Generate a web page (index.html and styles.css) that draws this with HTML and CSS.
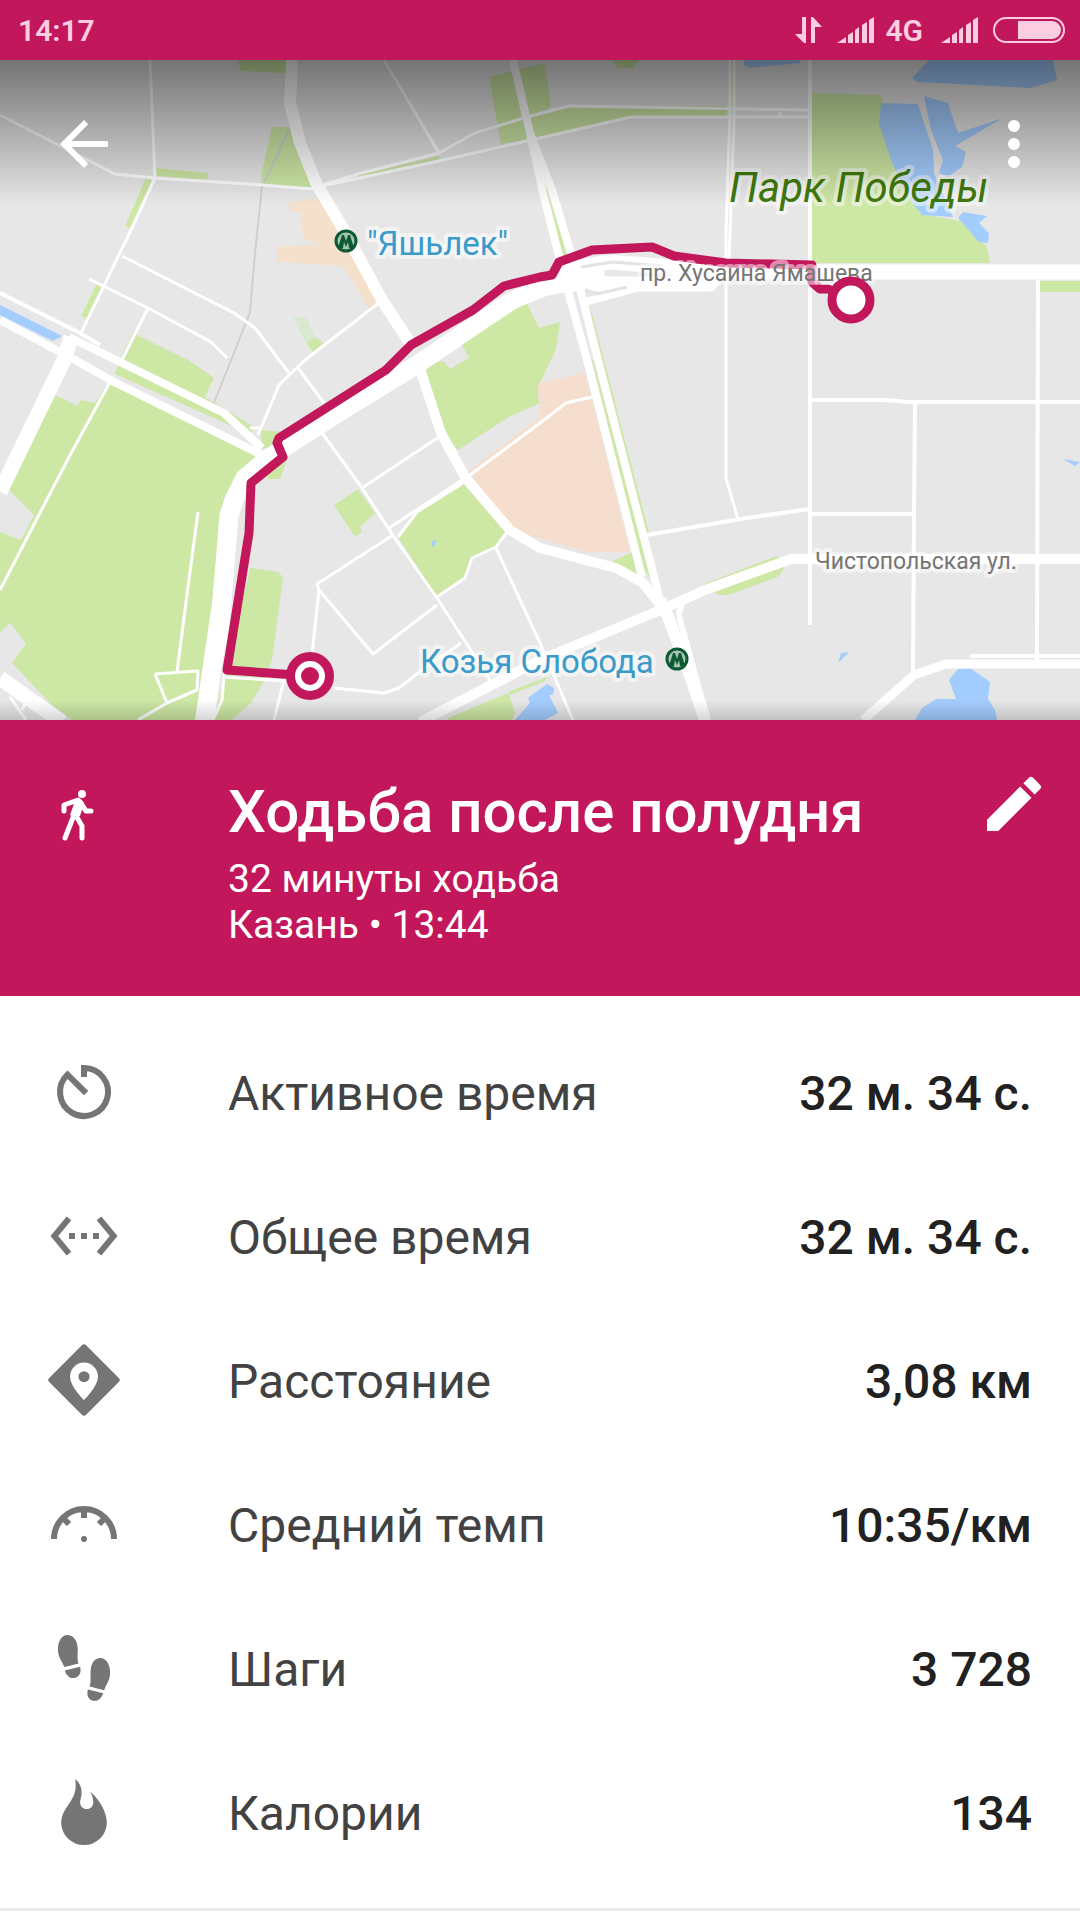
FILE: index.html
```
<!DOCTYPE html>
<html lang="ru">
<head>
<meta charset="UTF-8">
<meta name="viewport" content="width=device-width, initial-scale=1.0">
<title>Ходьба после полудня</title>
<link rel="stylesheet" href="styles.css">
</head>
<body>
<div class="status-bar">
  <span class="clock">14:17</span>
  <svg class="arrows" width="27" height="26" viewBox="0 0 27 26"><path d="M7 0h4v26h-2L0 17h7zM16 26V0h2l9 10h-7v16z"/></svg>
  <svg class="signal" width="37" height="26" viewBox="0 0 37 26"><path d="M0 26l9-6v6zM11 18l5-3v11h-5zM18 13l4-3v16h-4zM25 8l5-3v21h-5zM32 3l5-3v26h-5z"/></svg>
  <span class="network">4G</span>
  <svg class="signal" width="37" height="26" viewBox="0 0 37 26"><path d="M0 26l9-6v6zM11 18l5-3v11h-5zM18 13l4-3v16h-4zM25 8l5-3v21h-5zM32 3l5-3v26h-5z"/></svg>
  <svg class="battery" width="72" height="26" viewBox="0 0 72 26"><rect x="1" y="1" width="70" height="24" rx="12" fill="none" stroke="#fbcde0" stroke-width="2"/><path d="M25 4h34a9 9 0 0 1 0 18H25z"/></svg>
</div>

<div class="map-box">
  <svg class="map" viewBox="0 60 1080 660">
    <!-- parks -->
    <g fill="#cde7a5">
      <path d="M156 168l52 5v7l-52-4zM146 178l6 2-21 48-6-2zM96 285l6 2-15 31-6-2zM238 60h48v13l-45-2zM272 127h18l25 62-53-5-1-8z"/>
      <path d="M358 175l81-19 1 3-82 19zM489 77l51-13 5 2 6 41-11 6v24l-39 7zM540 115l29-9h158v11h-96l-91 21zM730 60h4v50h-4z"/>
      <path d="M612 60h27l-6 8h-15z"/>
      <path d="M812 93l69 2 4 15 15 70 25 35 42 7 20 25 3 16H812zM1039 281h41v11h-41z"/>
      <path d="M133 333l55 27 26 18-9 19 25 15 25 16-5 6-135-60 7-19zM260 430l22 2 8 8-3 20-7 19h-12zM55 395l22 11 4-6 14 3 15-23 148 77-20 16-14 25-17 155-11 67H72l-20-15-40-42 14-20-16-20-10 9V532l21 8 13-25-27-27z"/>
      <path d="M250 568l29 4 4 6-11 82-9 23-12 20-20 17h-18l13-47z"/>
      <path d="M425 365l18-4 7 8 19-11-11-20 42-28 25-11 14 29 21-6-4 28-17 35-1 15 2 3-33 15-49 32-17-20z"/>
      <path d="M463 483l43 50-10 14-24 11-7 20-28 19-39-60 19-24zM334 505l24-16 17 24-15 14 2 5-7 5zM306 343l9-6 9 6-11 9z"/>
      <path d="M535 150l20 65 15 50-4 0-22-75zM590 307l14 53 45 173-6 2-47-175zM592 360h4l53 209 11 21-16-20z"/>
      <path d="M611 562l22-10 9 27-27-14zM704 584l72-28 9 11-7 10-50 18h-10zM448 718l60-25 7 19-3 8h-64zM508 692l39-15-2 4-35 14z"/>
    </g>
    <path d="M293 317h13l9 20-9 6z" fill="#d8e9cf"/>
    <!-- built-up areas -->
    <path d="M538 384l47-12 45 180h-45l-45-14-30-8-35-47-5-13 70-53z" fill="#f6dece"/>
    <path d="M289 203l21-4 24 1 10 30 28 38 12 34-14 8-26-43-14-2-53-3v-15l38-2v-4l-12-1-2-27-12-3z" fill="#f5e1cb"/>
    <!-- water -->
    <g fill="#a4cdff">
      <path d="M744 60h56v3l-50 5-6-3zM929 60h124l4 20-26 8-114-6-5-4zM881 103l37 1 15 46 1 23 19 44-31-2-17-22-14-33-12-37z"/>
      <path d="M924 96l24 7 10 30 45-15-48 28 11 6-4 15-14 10-9-4 4-13-12-30zM963 212l24 4-8 7 10 10-1 10-9-1-21-24z"/>
      <path d="M0 305l62 31-9 5-53-26zM915 720l7-12 14-9h20l-7-19 9-11 12-1 20 14-2 17 7 11 2 10zM1063 459l17 3-5 4zM838 663l3-10 8-1z"/>
      <path d="M515 720l15-17-2-5 19-14 7 4-1 7h-4l9 18-13 7zM431 542l6-2-4 8z"/>
    </g>
    <!-- railway -->
    <path d="M289 130l-27 57-7 66-5 59-16 41-21 52" fill="none" stroke="#cfcfcf" stroke-width="2"/>
    <!-- small streets -->
    <g fill="none" stroke="#fff" stroke-width="3" stroke-linejoin="round">
      <path d="M0 115l115 59 40 4 107 7 51 4M150 60l5 118-24 52-51 105M384 60l55 93 36-20 52-16 42-11 241 4M317 187l41-13 81-21M317 187l122-26 101-23 91-21h179"/>
      <path d="M730 60v50l-4 125v243l12 41M734 60v60l-5 140M780 112v6"/>
      <path d="M122 256l112 57 21 15 34 45M89 279l59 29 63 34 16 16M148 308l-26 52M380 302l-75 58-26 25-21 50M250 428h10"/>
      <path d="M298 368l26 35M320 430l42 58 32 49 43 61 55 85M439 437l-77 51M393 535l-76 49 2 6-7 65M319 590l54 64 64-49M496 548l44 95 33 77M334 688l50 5 15-5 19-15 43-30"/>
      <path d="M592 397l-26 6-26 20-70 52-81 53M463 483l-46 29-19 25M507 532l-11 15-24 11-7 20-28 19M224 677l62 4M284 680l-10 40"/>
      <path d="M110 382L69 457 0 590M198 512l-10 75-11 85M155 674l43-3-1 19-30 13-29 17M155 674l12 29M236 520l-9 120-5 60-9 20M10 697l16 23M26 702l-4 8"/>
    </g>
    <g fill="none" stroke="#fff" stroke-width="4">
      <path d="M810 60v565M1038 280l-1 380M812 400h72l24 2h172M915 402l-1 111-1 162M812 514h102M647 535l100-17 63-9M970 656h110M0 293l80 40 20 12"/>
    </g>
    <!-- main roads -->
    <g fill="none" stroke="#fff" stroke-width="8" stroke-linejoin="round">
      <path d="M513 60l17 73 13 60 22 87 22 80 55 217M530 133l22 57 21 70 25 100 62 240" stroke-width="8"/>
      <path d="M0 320l75 40 39 22 148 73M69 337l51 25 104 51 38 35M585 302l55-15 40-9"/>
      <path d="M863 720l51-45 32-11h134" stroke-width="9"/>
      <path d="M417 360l24 73 24 44 45 53 30 18 76 20 27 15 19 24M420 722l120-62 123-51 42-19 86-31h289" stroke-width="10"/>
      <path d="M678 616l7-20M679 616l18 66 11 38" stroke-width="6"/>
      <path d="M660 600l7 14 26 70 12 36M292 60l-2 43 10 40 17 42 27 45 38 70 30 46" stroke-width="12"/>
      <path d="M0 678l62 44M71 337l-7 23L0 492" stroke-width="15"/>
      <path d="M265 460l80-51 70-43 56-38 42-28 32-13 60-11" stroke-width="18"/>
      <path d="M555 274l20-6 35-6 50 4 60 6M540 284h170l10-12h360" stroke-width="15"/>
      <path d="M272 455l-27 23-10 20-6 17-7 85-18 124" stroke-width="19"/>
    </g>
    <path d="M581 267l32-5 48 4M585 290l12 4 30-7" fill="none" stroke="#e3e3e3" stroke-width="3"/>

    <!-- metro -->
    <g class="metro">
      <circle cx="346" cy="241" r="10"/><path d="M338 248l4-13h2l2 6 2-6h2l4 13h-5l-1-6-2 5-2-5-1 6z"/>
      <circle cx="677" cy="659" r="10"/><path d="M669 666l4-13h2l2 6 2-6h2l4 13h-5l-1-6-2 5-2-5-1 6z"/>
    </g>

    <!-- route -->
    <path class="route" d="M850 300l-22-11h-8l-8-7v-17l-86-2-52-7-22-9-60 3-33 12-7 13-12 2-36 9-31 24-62 35-25 25-107 68-2 5 6 14-32 26-2 50-22 137 83 6"/>

    <g class="labels">
      <text class="station" x="367" y="255">"Яшьлек"</text>
      <text class="station" x="420" y="673">Козья Слобода</text>
      <text class="park" x="729" y="202">Парк Победы</text>
      <text class="street" x="640" y="281">пр. Хусаина Ямашева</text>
      <text class="street" x="815" y="569">Чистопольская ул.</text>
    </g>

    <circle cx="851" cy="300" r="19" fill="#fff" stroke="#c2185b" stroke-width="9"/>
    <circle cx="310" cy="676" r="24" fill="#c2185b"/>
    <circle cx="310" cy="676" r="12" fill="#c2185b" stroke="#fff" stroke-width="6"/>
  </svg>
  <div class="toolbar">
    <button type="button" aria-label="Назад">
      <svg width="72" height="72" viewBox="0 0 24 24"><path d="M20 11H7.83l5.59-5.59L12 4l-8 8 8 8 1.41-1.41L7.83 13H20v-2z"/></svg>
    </button>
    <button type="button" aria-label="Ещё">
      <svg width="72" height="72" viewBox="0 0 24 24"><path d="M12 8a2 2 0 1 0 0-4 2 2 0 0 0 0 4zm0 2a2 2 0 1 0 0 4 2 2 0 0 0 0-4zm0 6a2 2 0 1 0 0 4 2 2 0 0 0 0-4z"/></svg>
    </button>
  </div>
</div>

<header class="summary">
  <svg class="walk" width="72" height="76" viewBox="0 0 72 76">
    <circle cx="34" cy="26" r="4"/>
    <path d="M27 33l6-2 3 4-4 13-7 1-3-2z"/>
    <path d="M16 43v-6l14-5M32 34l6 9h5M26 47l-9 23M27 46l7 12v12" fill="none" stroke="#fff" stroke-width="5" stroke-linecap="round" stroke-linejoin="round"/>
  </svg>
  <div class="summary-text">
    <h1>Ходьба после полудня</h1>
    <p>32 минуты ходьба</p>
    <p>Казань • 13:44</p>
  </div>
  <button type="button" aria-label="Изменить">
    <svg width="72" height="72" viewBox="0 0 24 24"><path d="M3 17.25V21h3.75L17.81 9.94l-3.75-3.75L3 17.25zM20.71 7.04a1 1 0 0 0 0-1.41l-2.34-2.34a1 1 0 0 0-1.41 0l-1.83 1.83 3.75 3.75 1.83-1.83z"/></svg>
  </button>
</header>

<dl class="stats">
  <div class="row">
    <svg width="72" height="72" viewBox="0 0 24 24"><path d="M12 7V4A8 8 0 1 1 6.5 6.2L12.7 12.4" fill="none" stroke="#757575" stroke-width="2"/></svg>
    <dt>Активное время</dt>
    <dd>32 м. 34 с.</dd>
  </div>
  <div class="row">
    <svg width="72" height="72" viewBox="0 0 24 24"><path d="M7.77 6.76L6.23 5.48.82 12l5.41 6.52 1.54-1.28L3.42 12l4.35-5.24zM7 13h2v-2H7v2zm10-2h-2v2h2v-2zm-6 2h2v-2h-2v2zm6.77-7.52l-1.54 1.28L20.58 12l-4.35 5.24 1.54 1.28L23.18 12l-5.41-6.52z"/></svg>
    <dt>Общее время</dt>
    <dd>32 м. 34 с.</dd>
  </div>
  <div class="row">
    <svg width="72" height="72" viewBox="0 0 24 24"><rect x="3.3" y="3.3" width="17.4" height="17.4" rx="1" transform="rotate(45 12 12)"/><path d="M12 6.2a4.65 4.65 0 0 0-4.65 4.65c0 3.4 4.65 7.85 4.65 7.85s4.65-4.45 4.65-7.85A4.65 4.65 0 0 0 12 6.2z" fill="#fff"/><circle cx="12" cy="10.9" r="1.85"/></svg>
    <dt>Расстояние</dt>
    <dd>3,08 км</dd>
  </div>
  <div class="row">
    <svg width="72" height="72" viewBox="0 0 24 24"><path d="M2 17a10 10 0 0 1 20 0M12 7v3M4.9 9.9l2.1 2.1M19.1 9.9L17 12" fill="none" stroke="#757575" stroke-width="2"/><circle cx="12" cy="17" r="1"/></svg>
    <dt>Средний темп</dt>
    <dd>10:35/км</dd>
  </div>
  <div class="row">
    <svg width="72" height="72" viewBox="0 0 24 24">
      <path d="M6.4 1C4.5 1 3.3 3.2 3.3 5.8c0 2.500 1.500 4.100 2.200 5.900l4.700-1.200c-.6-1.800-.2-3-.3-5.200C9.800 2.800 8.400 1 6.400 1zM5.600 12.800l5.100-1.200c.5 1.900-.2 3.300-1.700 3.700-1.700.3-2.800-.7-3.400-2.500z"/>
      <path d="M17.500 8.700c1.900 0 3.200 2.200 3.200 4.800 0 2.500-1.300 4-2 5.900l-4.800-1.200c.5-1.800.2-2.900.3-5.100.1-2.600 1.300-4.400 3.300-4.400zM18.400 20.400l-5.100-1.200c-.5 1.900.1 3.300 1.600 3.700 1.700.3 2.900-.7 3.500-2.500z"/>
    </svg>
    <dt>Шаги</dt>
    <dd>3 728</dd>
  </div>
  <div class="row">
    <svg width="72" height="72" viewBox="0 0 24 24"><path d="M9.1 1c1.400 1.200 2.100 2.700 2.100 4.500 0 1.500-.5 2.200-.5 3.400A2.200 2.100 0 0 0 12.900 11a2.200 2.100 0 0 0 2.200-2.100c0-1.500-.4-2.600-1.100-3.700 3.300 2.800 5.600 7 5.600 10.400A7.500 7.400 0 0 1 12 23a7.500 7.400 0 0 1-7.600-7.400C4.400 10.700 9.200 8.500 9.200 3.500 9.200 2.500 9.200 1.800 9.100 1z"/></svg>
    <dt>Калории</dt>
    <dd>134</dd>
  </div>
</dl>
</body>
</html>
```

FILE: styles.css
```
  body {
    margin: 0;
    background-color: #fff;
    font-family: Roboto, "Noto Sans", sans-serif;
    color: #424242;
  }
  h1, p, dl, dt, dd {
    margin: 0;
  }
  svg {
    display: block;
    flex-shrink: 0;
  }
  button {
    padding: 0;
    border: none;
    background: none;
    cursor: pointer;
  }
  button svg {
    fill: #fff;
  }

  .status-bar {
    display: flex;
    align-items: center;
    height: 60px;
    padding: 0 15px 0 18px;
    background-color: #c2185b;
    color: #fbcde0;
    fill: #fbcde0;
    font-size: 30px;
    font-weight: 600;
  }
  .clock {
    flex: 1;
  }
  .signal {
    margin: 0 11px 0 15px;
  }
  .network + .signal {
    margin: 0 15px 0 18px;
  }

  .map-box {
    position: relative;
    background-color: #e7e7e7;
  }
  .map {
    width: 100%;
    height: auto;
  }
  .map-box::after {
    content: "";
    position: absolute;
    left: 0;
    right: 0;
    bottom: 0;
    height: 20px;
    background: linear-gradient(rgba(0, 0, 0, 0), rgba(0, 0, 0, 0.16));
  }
  .route {
    fill: none;
    stroke: #c2185b;
    stroke-width: 9;
    stroke-linejoin: round;
  }
  .metro circle {
    fill: #a9c4b2;
    stroke: #0b5a34;
    stroke-width: 3;
  }
  .metro path {
    fill: #0b5a34;
  }
  .labels text {
    paint-order: stroke;
    stroke: rgba(255, 255, 255, 0.5);
    stroke-width: 8;
    stroke-linejoin: round;
  }
  .station {
    font-size: 33px;
    fill: #3a9bcb;
  }
  .park {
    font-size: 42px;
    font-style: italic;
    fill: #3f7a0c;
  }
  .street {
    font-size: 23px;
    fill: #757575;
  }

  /* toolbar lies over the map on a dark fade */
  .toolbar {
    position: absolute;
    top: 0;
    left: 0;
    right: 0;
    display: flex;
    justify-content: space-between;
    align-items: flex-start;
    box-sizing: border-box;
    height: 146px;
    padding: 48px 30px 0 48px;
    background: linear-gradient(rgba(0, 0, 0, 0.5), rgba(0, 0, 0, 0));
  }

  .summary {
    display: flex;
    align-items: flex-start;
    padding: 48px 30px 48px 48px;
    background-color: #c2185b;
    color: #fff;
  }
  .walk {
    fill: #fff;
  }
  .summary-text {
    flex: 1;
    margin: 8px 0 0 108px;
  }
  .summary h1 {
    margin-bottom: 8px;
    font-size: 60px;
    font-weight: 500;
    line-height: 72px;
  }
  .summary p {
    font-size: 39px;
    line-height: 46px;
  }

  .stats {
    padding: 24px 0;
    border-bottom: 3px solid #ebebeb;
  }
  .row {
    display: flex;
    align-items: center;
    height: 144px;
    padding: 0 48px;
    fill: #757575;
    font-size: 48px;
  }
  .row dt {
    flex: 1;
    margin-left: 108px;
    padding-top: 3px;
  }
  .row dd {
    padding-top: 3px;
    color: #212121;
    font-weight: 500;
  }
```
